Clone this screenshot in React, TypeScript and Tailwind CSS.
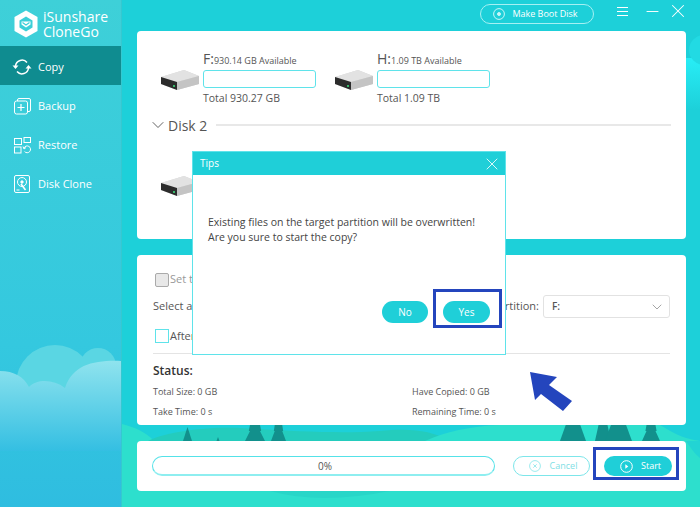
import { ChevronDown, Minus, X } from "lucide-react";
import type { ReactNode } from "react";

const font = { fontFamily: '"Open Sans", "Noto Sans", sans-serif' };

const Logo = () => (
  <svg width="24" height="28" viewBox="0 0 24 28" className="shrink-0">
    <path d="M12 0.5 23.5 7v14L12 27.5.5 21V7z" fill="#fff" />
    <path d="M5.5 10.5 12 6.5l6.5 4v7L12 21.5l-6.5-4z" fill="#3ccfd8" />
    <path d="M7.5 11.5h9v3l-4.5 3-4.5-3z" fill="#fff" />
    <path d="M8.5 12.5 12 15l3.5-2.5" fill="none" stroke="#3ccfd8" strokeWidth="1.2" />
  </svg>
);

const CopyIcon = () => (
  <svg width="20" height="20" viewBox="0 0 20 20" fill="none" stroke="#fff" strokeWidth="1.5">
    <path d="M3.5 9a6.6 6.6 0 0 1 11.5-3.6" />
    <path d="M16.5 11a6.6 6.6 0 0 1-11.5 3.6" />
    <path d="M.5 8.5h6L3.5 12z" fill="#fff" stroke="none" />
    <path d="M13.5 11.5h6L16.5 8z" fill="#fff" stroke="none" />
  </svg>
);

const BackupIcon = () => (
  <svg width="17" height="17" viewBox="0 0 17 17" fill="none" stroke="#fff" strokeWidth="1">
    <rect x="0.5" y="3" width="13" height="13" rx="2" />
    <path d="M3.5 3V2a1.5 1.5 0 0 1 1.5-1.5h10A1.5 1.5 0 0 1 16.5 2v10a1.5 1.5 0 0 1-1.5 1.5h-1.5" />
    <path d="M7 6v7M3.5 9.5h7" strokeWidth="1.2" />
  </svg>
);

const RestoreIcon = () => (
  <svg width="17" height="17" viewBox="0 0 17 17" fill="none" stroke="#fff" strokeWidth="1">
    <rect x="0.5" y="1.5" width="7" height="6" />
    <rect x="10" y="0.5" width="6.5" height="5" />
    <rect x="0.5" y="10" width="6.5" height="6" />
    <path d="M10 11a3.4 3.4 0 1 1 .6 3.6" />
    <path d="M9 9.5 10 12l2-1.5" />
  </svg>
);

const CloneIcon = () => (
  <svg width="16" height="18" viewBox="0 0 16 18" fill="none" stroke="#fff" strokeWidth="1">
    <rect x="0.5" y="0.5" width="15" height="17" rx="1.5" />
    <circle cx="8" cy="7" r="4.5" />
    <circle cx="8" cy="7" r="1.2" fill="#fff" />
    <path d="M7 9 11.5 15" strokeWidth="1.5" />
    <path d="M2.5 15h3" />
  </svg>
);

const NavItem = ({ icon, label, active }: { icon: ReactNode; label: string; active?: boolean }) => (
  <div className={`flex h-[39px] items-center pt-[3px] text-[11px] text-white ${active ? "bg-[#0f8c90]" : ""}`}>
    <span className="flex w-[38px] justify-center pl-[6px]">{icon}</span>
    <span>{label}</span>
  </div>
);

const Drive = () => (
  <svg width="40" height="22" viewBox="0 0 40 22" className="shrink-0">
    <path d="M1 8 24 1l15 6v8L17 21 1 15z" fill="#d6d6d6" />
    <path d="M1 8 24 1l15 6-22 6z" fill="#e2e2e2" />
    <path d="M1 8 17 13v8L1 15z" fill="#2c2c2c" />
    <path d="M17 13l22-6v8L17 21z" fill="#c4c4c4" />
    <rect x="13" y="16" width="2" height="2" fill="#38b66a" />
  </svg>
);

const DriveBlock = ({ letter, available, total }: { letter: string; available: string; total: string }) => (
  <div className="flex items-center gap-[3px]">
    <div className="mt-[3px]">
      <Drive />
    </div>
    <div className="w-[113px]">
      <div className="flex h-[20px] items-baseline text-[#555]">
        <span className="text-[14px] leading-[20px]">{letter}</span>
        <span className="text-[9px] whitespace-nowrap">{available}</span>
      </div>
      <div className="mt-[1px] h-[18px] rounded-[3px] border border-[#5fe3ea] bg-white" />
      <div className="mt-[1px] text-[10.5px] leading-[18px] text-[#555]">{total}</div>
    </div>
  </div>
);

const Tree = ({ x, w, tiers }: { x: number; w: number; tiers?: boolean }) => (
  <path
    d={
      tiers
        ? `M${x + w * 0.25} 425h${w * 0.5}l${w * 0.06} 6h-${w * 0.06}l${w * 0.25} 10h-${w}l${w * 0.25}-10h-${w * 0.06}z`
        : `M${x + w * 0.22} 425h${w * 0.56}l${w * 0.22} 16h-${w}z`
    }
  />
);

const Background = () => (
  <svg className="absolute inset-0" width="700" height="507" viewBox="0 0 700 507">
    <defs>
      <linearGradient id="strip" x1="0" y1="0" x2="0" y2="1">
        <stop offset="0" stopColor="#28edf6" />
        <stop offset="1" stopColor="#1dd0d9" />
      </linearGradient>
    </defs>
    <rect width="700" height="507" fill="#1dd0d9" />
    <rect x="686" y="58" width="14" height="52" fill="url(#strip)" />
    <circle cx="704" cy="50" r="15" fill="#22dae3" />
    <path d="M122 441V424c12 3 24 8 32 17z" fill="#2ddfcd" />
    <path d="M148 441c12-7 52-15 92-13 50 3 100 6 140 3 30-3 50-1 70 10z" fill="#24ccbd" />
    <path d="M425 441c20-9 45-15 75-16h160c12 7 20 13 40 16z" fill="#2ddfcd" />
    <rect x="122" y="441" width="578" height="66" fill="#2ddfcd" />
    <path d="M686 441c6 9 10 14 14 17v-17z" fill="#22d4d4" />
    <path d="M270 491q50 14 120 0z" fill="#28d6c8" />
    <g fill="#12908c">
      <path d="M187.500 427l-4.500 14h9z" />
      <path d="M218 437l-1.500 4h3z" />
      <Tree x={245} w={20} tiers />
      <Tree x={271} w={15} tiers />
      <Tree x={560} w={26} />
      <Tree x={595} w={16} />
      <Tree x={605} w={27} />
      <Tree x={642} w={18} tiers />
    </g>
  </svg>
);

const SidebarClouds = () => (
  <svg className="absolute bottom-0 left-0" width="122" height="507" viewBox="0 0 122 507">
    <defs>
      <linearGradient id="side" x1="0" y1="0" x2="0" y2="1">
        <stop offset="0" stopColor="#3ed0d8" />
        <stop offset="0.68" stopColor="#34c8df" />
        <stop offset="1" stopColor="#2fbde0" />
      </linearGradient>
      <linearGradient id="cloud" x1="0" y1="0" x2="0" y2="1">
        <stop offset="0" stopColor="#8fe3ee" />
        <stop offset="1" stopColor="#34bfe2" />
      </linearGradient>
    </defs>
    <rect width="122" height="507" fill="url(#side)" />
    <circle cx="55" cy="384" r="39" fill="#5ad6e3" />
    <circle cx="98" cy="366" r="18" fill="#5ad6e3" />
    <path d="M0 371c14 0 24 6 29 16 8-8 24-8 36 1 8-24 30-28 57-27v90H0z" fill="url(#cloud)" />
  </svg>
);

const App = () => {
  return (
    <div className="relative flex h-[507px] w-[700px] overflow-hidden" style={font}>
      <Background />

      <aside className="relative w-[122px] shrink-0 overflow-hidden border-r border-[#35c8d0]">
        <SidebarClouds />
        <div className="relative">
          <div className="flex h-[46px] items-center gap-[5px] pl-[14px] pt-[1px]">
            <Logo />
            <div className="text-[14px] text-white">
              <div className="h-[15px] leading-[15px]">iSunshare</div>
              <div className="h-[15px] leading-[15px]">CloneGo</div>
            </div>
          </div>
          <NavItem icon={<CopyIcon />} label="Copy" active />
          <NavItem icon={<BackupIcon />} label="Backup" />
          <NavItem icon={<RestoreIcon />} label="Restore" />
          <NavItem icon={<CloneIcon />} label="Disk Clone" />
        </div>
      </aside>

      <main className="relative min-w-0 flex-1 pl-[15px] pr-[14px]">
        <header className="flex h-[31px] items-start pl-[343px] pt-[4px] text-white">
          <div className="flex h-[20px] w-[114px] shrink-0 items-center justify-center gap-[7px] rounded-full border border-[#a5f0f3] pr-[3px] text-[9px]">
            <svg width="12" height="12" viewBox="0 0 12 12" fill="none" stroke="#c8f6f8">
              <circle cx="6" cy="6" r="5.4" />
              <circle cx="6" cy="6" r="1.5" fill="#c8f6f8" />
            </svg>
            Make Boot Disk
          </div>
          <div className="ml-[23px] mt-[3px] flex w-[11px] shrink-0 flex-col gap-[3px]">
            <span className="h-px bg-white" />
            <span className="h-px bg-white" />
            <span className="h-px bg-white" />
          </div>
          <Minus size={19} strokeWidth={1.2} className="ml-[15px] -mt-[2px] shrink-0" />
          <X size={22} strokeWidth={1.1} className="ml-[5px] -mt-[4px] shrink-0" />
        </header>

        <section className="h-[208px] rounded-[4px] bg-white pl-[23px] pr-[15px] pt-[18px]">
          <div className="flex gap-[18px]">
            <DriveBlock letter="F:" available="930.14 GB Available" total="Total 930.27 GB" />
            <DriveBlock letter="H:" available="1.09 TB Available" total="Total 1.09 TB" />
          </div>
          <div className="-ml-[12px] mt-[6px] flex h-[24px] items-center">
            <ChevronDown size={20} strokeWidth={1} className="text-[#444]" />
            <span className="text-[14px] text-[#555]">Disk 2</span>
            <span className="ml-[9px] h-[2px] flex-1 bg-[#e8e8e8]" />
          </div>
          <div className="mt-[38px]">
            <Drive />
          </div>
        </section>

        <section className="mt-[16px] h-[170px] rounded-[4px] bg-white px-[16px] text-[#555]">
          <div className="flex h-[34px] items-end pb-[2px] pl-[2px]">
            <span className="h-[14px] w-[14px] rounded-[2px] border border-[#aaa] bg-[#e8e8e8]" />
            <span className="ml-px text-[11px] text-[#999]">Set t</span>
          </div>
          <div className="flex h-[29px] items-center justify-between pt-[6px] text-[11px]">
            <span>Select a</span>
            <div className="flex items-center gap-[4px]">
              <span className="text-[#555]">rtition:</span>
              <div className="flex h-[23px] w-[127px] items-center justify-between rounded-[3px] border border-[#e2e2e2] pl-[8px] pr-[4px] text-[10px] font-semibold">
                F:
                <ChevronDown size={16} strokeWidth={1} className="text-[#777]" />
              </div>
            </div>
          </div>
          <div className="flex h-[25px] items-end pl-[2px] text-[11px]">
            <span className="h-[14px] w-[14px] border border-[#5fe3ea]" />
            <span className="ml-px leading-[14px]">After</span>
          </div>
          <div className="mt-[10px] h-px bg-[#e4e4e4]" />
          <div className="mt-[9px] text-[12px] font-semibold leading-[16px] text-[#333]">Status:</div>
          <div className="mt-[5px] grid grid-cols-[259px_1fr] gap-y-[5px] text-[9px] leading-[15px]">
            <span>Total Size: 0 GB</span>
            <span>Have Copied: 0 GB</span>
            <span>Take Time: 0 s</span>
            <span>Remaining Time: 0 s</span>
          </div>
        </section>

        <section className="mt-[16px] flex h-[50px] items-center rounded-[4px] bg-white pl-[15px]">
          <div className="flex h-[20px] w-[343px] items-center justify-center rounded-full border border-[#55e2e8] border-b-2 border-b-[#8eeef0] pl-[3px] pt-[1px] text-[10px] text-[#555]">
            0%
          </div>
          <div className="ml-[18px] flex h-[20px] w-[77px] items-center justify-center gap-[9px] rounded-full border border-[#7de6ea] pl-[3px] text-[9px] text-[#7fe0e5]">
            <svg width="12" height="12" viewBox="0 0 12 12" fill="none" stroke="#9debee">
              <circle cx="6" cy="6" r="5.4" />
              <path d="M4.300 4.300l3.400 3.400M7.700 4.300 4.300 7.700" />
            </svg>
            Cancel
          </div>
          <div className="ml-[14px] flex h-[20px] w-[68px] items-center justify-center gap-[8px] rounded-full bg-[#1fcfd8] pl-[5px] text-[9px] text-white">
            <svg width="13" height="13" viewBox="0 0 13 13" fill="none" stroke="#fff">
              <circle cx="6.5" cy="6.5" r="5.8" />
              <path d="M5.300 4.300v4.400l3-2.200z" fill="#fff" stroke="none" />
            </svg>
            Start
          </div>
        </section>
      </main>

      {/* dialog */}
      <div className="absolute left-[192px] top-[151px] h-[204px] w-[314px] border border-[#5fe3ea] bg-white">
        <div className="flex h-[23px] items-center justify-between bg-[#1fcfd8] pl-[7px] pr-[3px] text-[10px] text-white">
          Tips
          <X size={20} strokeWidth={1} />
        </div>
        <p className="ml-[15px] mt-[40px] text-[10.5px] leading-[15px] text-[#444]">
          Existing files on the target partition will be overwritten!
          <br />
          Are you sure to start the copy?
        </p>
        <div className="absolute left-[189px] top-[149px] flex gap-[15px] text-[10px] text-white">
          <span className="flex h-[22px] w-[46px] items-center justify-center rounded-full bg-[#1fcfd8]">No</span>
          <span className="flex h-[22px] w-[47px] items-center justify-center rounded-full bg-[#1fcfd8]">Yes</span>
        </div>
      </div>

      {/* annotations */}
      <div className="absolute left-[433px] top-[289px] h-[39px] w-[69px] border-[3px] border-[#2445bd]" />
      <div className="absolute left-[593px] top-[447px] h-[33px] w-[86px] border-[3px] border-[#2445bd]" />
      <svg className="absolute left-[525px] top-[368px]" width="52" height="48" viewBox="0 0 52 48">
        <path d="M5 4 32 9 24 17 47 33 38 43 16 26 10 32z" fill="#2445bd" />
      </svg>
    </div>
  );
};

export default App;
